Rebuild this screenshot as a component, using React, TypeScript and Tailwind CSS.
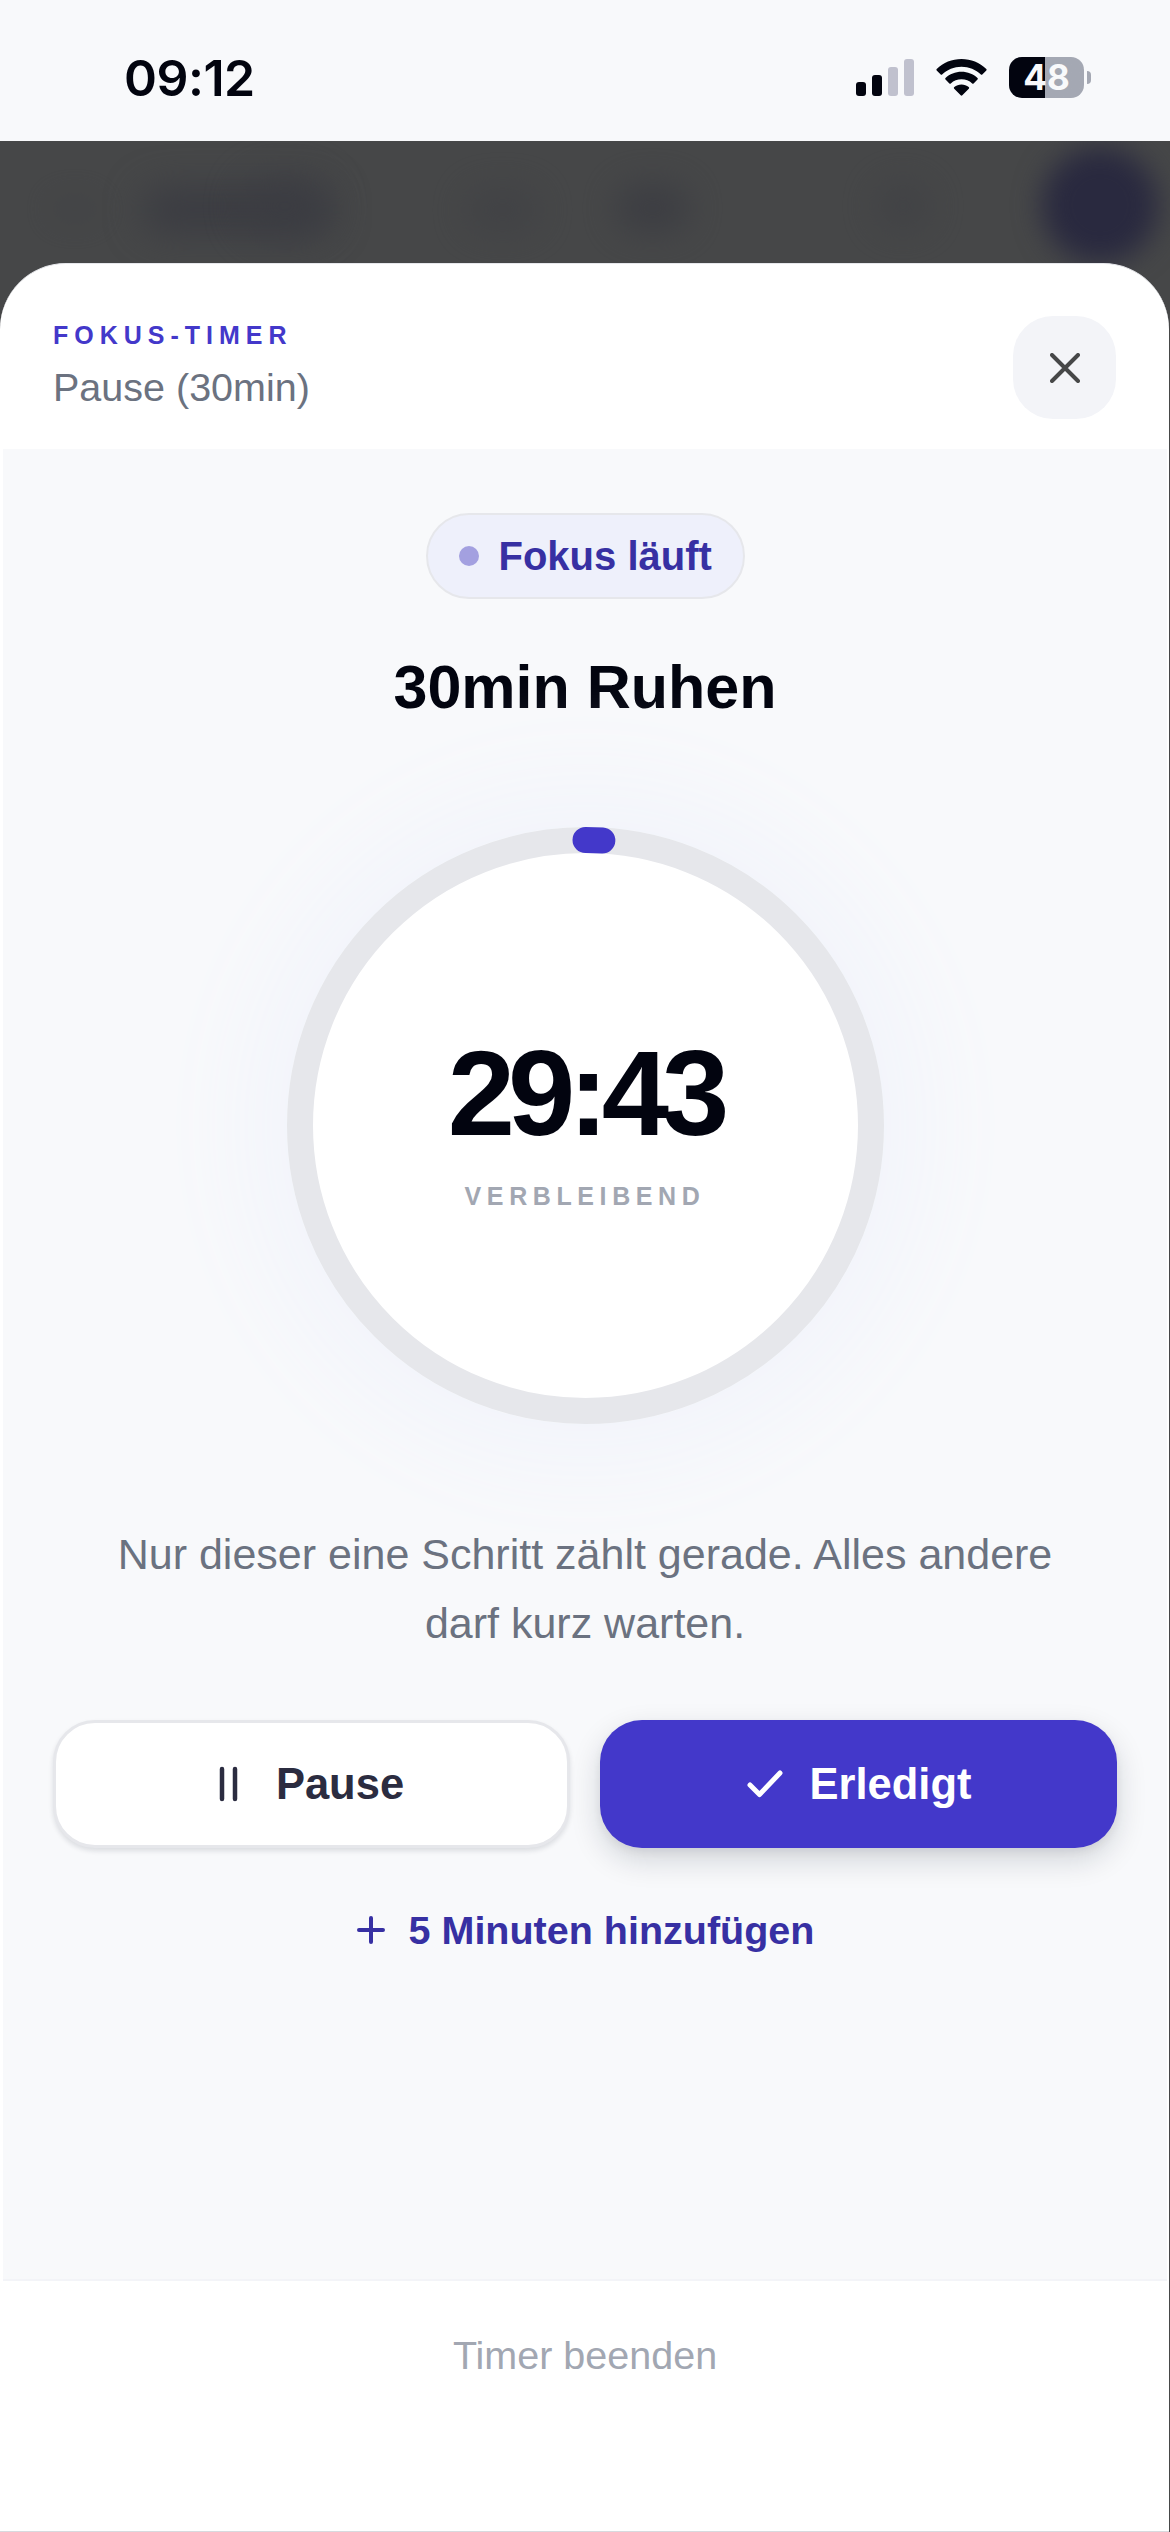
import React from 'react'

const TOTAL_SECONDS = 1800;
const REMAINING_SECONDS = 1783;

const formatTime = (seconds: number) => {
  const m = Math.floor(seconds / 60);
  const s = seconds % 60;
  return `${String(m).padStart(2, '0')}:${String(s).padStart(2, '0')}`;
}

const StatusBar = () => {
  return (
    <div className="flex h-[141px] shrink-0 items-start justify-between bg-[#f8f9fb] pt-[57px] pl-[124px] pr-[79px] text-[#02040f]">
      <span className="font-[Inter] text-[50px] leading-[42px] font-semibold tracking-[-0.5px]">09:12</span>
      <div className="flex items-start">
        <svg className="mt-[2px] h-[37px] w-[58px]" viewBox="0 0 58 37">
          <rect x="0" y="23" width="10" height="14" rx="3" fill="#02040f" />
          <rect x="16" y="16" width="10" height="21" rx="3" fill="#02040f" />
          <rect x="32" y="8" width="10" height="29" rx="3" fill="#c0c1ce" />
          <rect x="48" y="0" width="10" height="37" rx="3" fill="#c0c1ce" />
        </svg>
        <svg className="mt-[2px] ml-[22px] h-[37px] w-[51px]" viewBox="0 0 51 37" fill="#02040f">
          <path d="M25.500 7.700C33 7.700 39.800 10.600 44.900 15.400C45.300 15.800 45.900 15.800 46.300 15.400L50.300 11.500C50.800 11 50.800 10.400 50.300 9.900C43.700 3.700 35 0 25.500 0C16 0 7.300 3.700.700 9.900C.200 10.400.200 11 .700 11.500L4.700 15.400C5.100 15.800 5.700 15.800 6.100 15.400C11.200 10.600 18 7.700 25.500 7.700Z" />
          <path d="M25.500 20.300C29.600 20.300 33.300 21.800 36.200 24.400C36.600 24.800 37.200 24.800 37.600 24.400L41.500 20.500C42 20 42 19.400 41.500 18.900C37.300 15 31.700 12.700 25.500 12.700C19.300 12.700 13.700 15 9.500 18.900C9 19.400 9 20 9.500 20.500L13.400 24.400C13.800 24.800 14.400 24.800 14.800 24.400C17.700 21.800 21.400 20.300 25.500 20.300Z" />
          <path d="M32.800 29.700C33.300 29.200 33.300 28.600 32.700 28.100C30.700 26.500 28.200 25.500 25.500 25.500C22.800 25.500 20.300 26.500 18.300 28.100C17.700 28.600 17.700 29.200 18.200 29.700L24.700 36.300C25.200 36.800 25.800 36.800 26.300 36.300Z" />
        </svg>
        <div className="ml-[22px] flex items-center">
          <div className="flex h-[41px] w-[75px] items-center justify-center rounded-[13px] bg-linear-to-r from-[#02040f] from-48% to-[#a4a8b3] to-48%">
            <span className="font-[Inter] text-[35px] leading-[41px] font-bold text-[#f8f9fb]">48</span>
          </div>
          <div className="ml-[3px] h-[13px] w-[4px] rounded-r-full bg-[#a4a8b3]" />
        </div>
      </div>
    </div>
  )
}

// blurred page behind the sheet
const Backdrop = () => {
  return (
    <div className="absolute inset-x-0 top-0 h-[190px] overflow-hidden">
      <div className="absolute top-[54px] left-[50px] h-[28px] w-[50px] rounded-full bg-[#3f4044] opacity-40 blur-[14px]" />
      <div className="absolute top-[46px] left-[142px] h-[46px] w-[190px] rounded-full bg-[#3b3c42] blur-[18px]" />
      <div className="absolute top-[32px] left-[240px] h-[66px] w-[90px] rounded-full bg-[#3b3c42] opacity-60 blur-[18px]" />
      <div className="absolute top-[46px] left-[465px] h-[46px] w-[75px] rounded-full bg-[#3f4044] opacity-60 blur-[16px]" />
      <div className="absolute top-[42px] left-[615px] h-[50px] w-[75px] rounded-full bg-[#3b3c42] opacity-80 blur-[16px]" />
      <div className="absolute top-[40px] left-[875px] h-[50px] w-[56px] rounded-full bg-[#3f4044] opacity-60 blur-[16px]" />
      <div className="absolute top-[6px] left-[1042px] h-[116px] w-[116px] rounded-full bg-[#29293f] blur-[14px]" />
    </div>
  )
}

const TimerRing = () => {
  const radius = 285.5;
  const circumference = 2 * Math.PI * radius;
  const elapsed = (TOTAL_SECONDS - REMAINING_SECONDS) / TOTAL_SECONDS;

  return (
    <div className="relative mt-[102px] flex h-[597px] w-[597px] shrink-0 flex-col items-center rounded-full shadow-[0_0_90px_50px_#f3f5fb]">
      <svg className="absolute inset-0 h-full w-full -rotate-90" viewBox="0 0 597 597" fill="none">
        <circle cx="298.500" cy="298.500" r={radius} fill="#ffffff" stroke="#e6e7eb" strokeWidth="26" />
        <circle
          cx="298.500"
          cy="298.500"
          r={radius}
          stroke="#4338ca"
          strokeWidth="26"
          strokeLinecap="round"
          strokeDasharray={`${circumference * elapsed} ${circumference}`}
        />
      </svg>
      <span className="relative mt-[206px] text-[121px] leading-[121px] font-bold tracking-[-7px] text-[#02040f]">
        {formatTime(REMAINING_SECONDS)}
      </span>
      <span className="relative mt-[24px] text-[25px] leading-[36px] font-bold tracking-[5.6px] text-[#a2a7b2]">VERBLEIBEND</span>
    </div>
  )
}

const App = () => {
  return (
    <div className="flex h-[2532px] w-[1170px] flex-col overflow-hidden bg-[#464748] font-['Liberation_Sans',Arial,sans-serif]">
      <StatusBar />
      <main className="relative flex min-h-0 flex-1 flex-col pt-[122px]">
        <Backdrop />
        <section className="relative mr-px flex min-h-0 flex-1 flex-col overflow-hidden rounded-t-[66px] border-t border-b border-t-[#e6e7eb] border-b-[#d8dade] bg-white pr-[2px] pl-[3px]">
          <header className="flex h-[185px] shrink-0 items-start justify-between pl-[50px] pr-[51px] pt-[52px]">
            <div className="flex flex-col">
              <span className="mt-px text-[25px] leading-[36px] font-bold tracking-[6px] text-[#4338ca]">FOKUS-TIMER</span>
              <span className="mt-[8px] text-[39.500px] leading-[52px] text-[#6b7280]">Pause (30min)</span>
            </div>
            <button className="flex h-[103px] w-[103px] items-center justify-center rounded-[40px] bg-[#f3f4f8]">
              <svg className="h-[30px] w-[30px]" viewBox="0 0 30 30" fill="none" stroke="#464748" strokeWidth="4" strokeLinecap="round">
                <path d="M2 2L28 28M28 2L2 28" />
              </svg>
            </button>
          </header>

          <div className="flex h-[1830px] shrink-0 flex-col items-center bg-[#f8f9fb] px-[50px] pt-[64px]">
            <div className="flex h-[86px] w-[319px] shrink-0 items-center rounded-full border-[2.500px] border-[#e6e7eb] bg-[#eef0fb] pl-[31px]">
              <span className="h-[20px] w-[20px] rounded-full bg-[#a3a0e0]" />
              <span className="ml-[20px] text-[40px] leading-[50px] font-bold text-[#3730a3]">Fokus läuft</span>
            </div>

            <h1 className="mt-[50px] text-[61px] leading-[76px] font-bold text-[#02040f]">30min Ruhen</h1>

            <TimerRing />

            <p className="relative mt-[96px] text-center text-[43px] leading-[69px] text-[#6b7280]">
              Nur dieser eine Schritt zählt gerade. Alles andere
              <br />
              darf kurz warten.
            </p>

            <div className="relative mt-[62px] grid w-full shrink-0 grid-cols-2 gap-[30px]">
              <button className="flex h-[128px] items-center justify-center rounded-[42px] border-[3px] border-[#e6e7eb] bg-white shadow-[0_3px_5px_rgba(15,23,42,0.12)]">
                <svg className="mr-[38px] h-[36px] w-[19px]" viewBox="0 0 19 36" fill="none" stroke="#2b2c40" strokeWidth="4.500" strokeLinecap="round">
                  <path d="M3 3V33M16 3V33" />
                </svg>
                <span className="text-[43.500px] leading-[60px] font-bold text-[#2b2c40]">Pause</span>
              </button>
              <button className="flex h-[128px] items-center justify-center rounded-[42px] bg-[#4338ca] shadow-[0_12px_30px_rgba(15,23,42,0.16),0_4px_8px_rgba(15,23,42,0.06)]">
                <svg className="mr-[26px] h-[28px] w-[38px]" viewBox="0 0 38 28" fill="none" stroke="#ffffff" strokeWidth="5" strokeLinecap="round" strokeLinejoin="round">
                  <path d="M4 15L13.500 24.500L34 3" />
                </svg>
                <span className="text-[43.500px] leading-[60px] font-bold text-white">Erledigt</span>
              </button>
            </div>

            <button className="relative mt-[52px] flex h-[60px] items-center justify-center">
              <svg className="mr-[23px] h-[30px] w-[30px]" viewBox="0 0 30 30" fill="none" stroke="#3730a3" strokeWidth="4" strokeLinecap="round">
                <path d="M15 3V27M3 15H27" />
              </svg>
              <span className="text-[39.500px] leading-[60px] font-bold text-[#3730a3]">5 Minuten hinzufügen</span>
            </button>
          </div>

          <footer className="flex flex-1 justify-center border-t-2 border-[#f3f4f8] bg-white pt-[44px]">
            <button className="h-[60px] text-[39.500px] leading-[60px] text-[#a2a7b2]">Timer beenden</button>
          </footer>
        </section>
      </main>
    </div>
  )
}

export default App
